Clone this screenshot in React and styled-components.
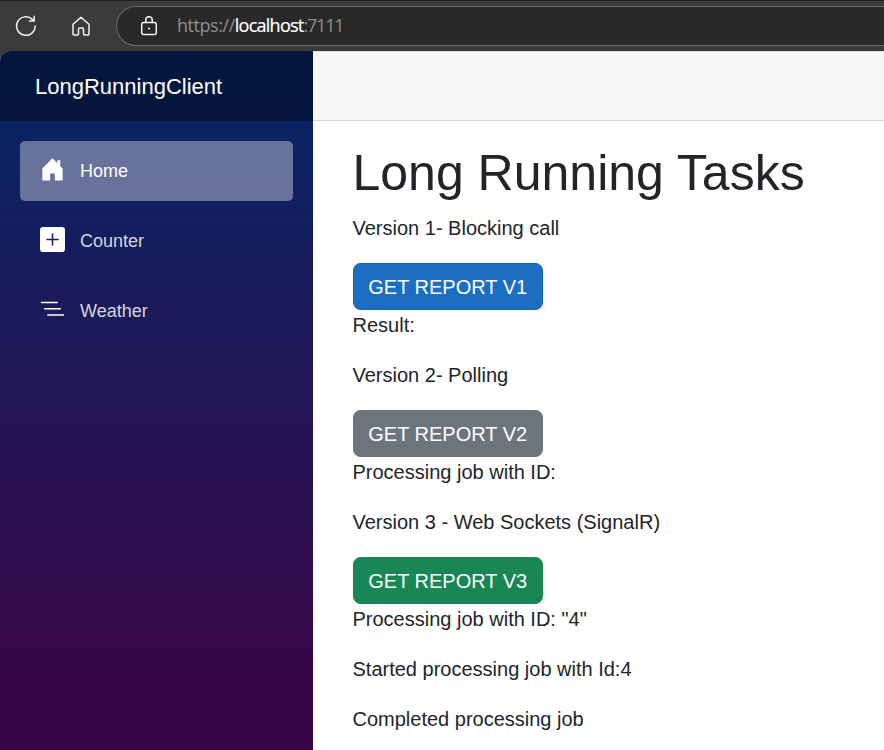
import React from "react";
import styled, { createGlobalStyle } from "styled-components";

const GlobalStyle = createGlobalStyle`
  *, *::before, *::after { box-sizing: border-box; }
  body {
    margin: 0;
    background: #3b3b3b;
    color: #212529;
    font: 400 20px/30px "Liberation Sans", Arial, sans-serif;
  }
`;

const Window = styled.div`
  display: flex;
  flex-direction: column;
  height: 750px;
  overflow: hidden;
`;

const BrowserBar = styled.header`
  display: flex;
  align-items: center;
  flex: none;
  height: 51px;
  padding-left: 15px;
  border-top: 1px solid #202020;
  background: #3b3b3b;
  color: #f2f2f2;
`;

const BarIcon = styled.svg`
  flex: none;
  width: 22px;
  height: 22px;
  margin-right: ${(p) => p.$gap || 0}px;
  fill: none;
  stroke: currentColor;
  stroke-width: 1.5;
  stroke-linecap: round;
  stroke-linejoin: round;
`;

const AddressBar = styled.div`
  display: flex;
  align-items: center;
  flex: 1;
  height: 40px;
  padding-left: 21px;
  border: 1px solid #6b6b6b;
  border-right: 0;
  border-radius: 20px 0 0 20px;
  background: #292929;
`;

const Url = styled.span`
  padding-bottom: 2px;
  color: #8e8e8e;
  font: 400 18px/24px "Open Sans", "Noto Sans", sans-serif;
  letter-spacing: -0.45px;
`;

const Host = styled.span`
  color: #fff;
  letter-spacing: -0.75px;
  -webkit-text-stroke: 0.2px #fff;
`;

const Port = styled.span`
  letter-spacing: -1.2px;
`;

const Page = styled.div`
  display: flex;
  flex: 1;
  min-height: 0;
  overflow: hidden;
  border-top-left-radius: 10px;
  background: #fff;
`;

const Sidebar = styled.aside`
  flex: none;
  width: 313px;
  background: linear-gradient(180deg, rgb(5, 39, 103) 0%, #3a0647 93%);
`;

const Brand = styled.div`
  display: flex;
  align-items: center;
  height: 70px;
  padding: 2px 0 0 35px;
  background: rgba(0, 0, 0, 0.4);
  color: #fff;
  font-size: 22px;
`;

const Nav = styled.nav`
  display: flex;
  flex-direction: column;
  gap: 10px;
  padding: 20px;
`;

const NavItem = styled.a`
  display: flex;
  align-items: center;
  height: 60px;
  padding-left: 20px;
  border-radius: 5px;
  background: ${(p) => (p.$active ? "rgba(255, 255, 255, 0.37)" : "transparent")};
  color: ${(p) => (p.$active ? "#fff" : "#d7d7d7")};
  font-size: 18px;
`;

const NavIcon = styled.svg`
  width: 25px;
  height: 25px;
  margin: 0 15px 3px 0;
  fill: #fff;
`;

const Main = styled.main`
  flex: 1;
  min-width: 0;
`;

const TopRow = styled.div`
  height: 70px;
  border-top: 1px solid #dedede;
  border-bottom: 1px solid #d6d5d5;
  background: #f7f7f7;
`;

const Content = styled.article`
  padding: 22px 30px 0 39.5px;
`;

const Title = styled.h1`
  margin: 0 0 10px;
  font-size: 50px;
  font-weight: 400;
  line-height: 60px;
`;

const Text = styled.p`
  margin: 0 0 20px;
`;

const Button = styled.button`
  display: block;
  width: 190.5px;
  height: 47px;
  padding: 0;
  border: 1px solid ${(p) => p.$border};
  border-radius: 7.5px;
  background: ${(p) => p.$color};
  color: #fff;
  font: inherit;
`;

export default function App() {
  return (
    <Window>
      <GlobalStyle />
      <BrowserBar>
        <BarIcon $gap={33} viewBox="0 0 22 22">
          <path d="M20.2 11a9.3 9.3 0 1 1-3.1-6.9L19 6M19.2 1.3V6H14.5" />
        </BarIcon>
        <BarIcon $gap={24} viewBox="0 0 22 22">
          <path d="M3 9.2 11 2.3l8 6.9V19a1 1 0 0 1-1 1h-3.5a1 1 0 0 1-1-1v-5a1 1 0 0 0-1-1h-3a1 1 0 0 0-1 1v5a1 1 0 0 1-1 1H4a1 1 0 0 1-1-1Z" />
        </BarIcon>
        <AddressBar>
          <BarIcon $gap={17} viewBox="0 0 22 22">
            <rect x="3.7" y="7.5" width="14.6" height="12" rx="2" />
            <path d="M7.8 7.5V5a3.2 3.2 0 0 1 6.4 0v2.5" />
            <circle cx="11" cy="13.5" r="1.1" fill="currentColor" stroke="none" />
          </BarIcon>
          <Url>
            https://<Host>localhost</Host>
            <Port>:7111</Port>
          </Url>
        </AddressBar>
      </BrowserBar>
      <Page>
        <Sidebar>
          <Brand>LongRunningClient</Brand>
          <Nav>
            <NavItem $active>
              <NavIcon viewBox="0 0 16 16">
                <path d="M6.5 14.5v-3.505c0-.245.25-.495.5-.495h2c.25 0 .5.25.5.5v3.5a.5.5 0 0 0 .5.5h4a.5.5 0 0 0 .5-.5v-7a.5.5 0 0 0-.146-.354L13 5.793V2.5a.5.5 0 0 0-.5-.5h-1a.5.5 0 0 0-.5.5v1.293L8.354 1.146a.5.5 0 0 0-.708 0l-6 6A.5.5 0 0 0 1.5 7.5v7a.5.5 0 0 0 .5.5h4a.5.5 0 0 0 .5-.5Z" />
              </NavIcon>
              Home
            </NavItem>
            <NavItem>
              <NavIcon viewBox="0 0 16 16">
                <path d="M2 0a2 2 0 0 0-2 2v12a2 2 0 0 0 2 2h12a2 2 0 0 0 2-2V2a2 2 0 0 0-2-2H2zm6.5 4.5v3h3a.5.5 0 0 1 0 1h-3v3a.5.5 0 0 1-1 0v-3h-3a.5.5 0 0 1 0-1h3v-3a.5.5 0 0 1 1 0z" />
              </NavIcon>
              Counter
            </NavItem>
            <NavItem>
              <NavIcon viewBox="0 0 16 16">
                <path fillRule="evenodd" d="M4.5 11.5A.5.5 0 0 1 5 11h10a.5.5 0 0 1 0 1H5a.5.5 0 0 1-.5-.5zm-2-4A.5.5 0 0 1 3 7h10a.5.5 0 0 1 0 1H3a.5.5 0 0 1-.5-.5zm-2-4A.5.5 0 0 1 1 3h10a.5.5 0 0 1 0 1H1a.5.5 0 0 1-.5-.5z" />
              </NavIcon>
              Weather
            </NavItem>
          </Nav>
        </Sidebar>
        <Main>
          <TopRow />
          <Content>
            <Title>Long Running Tasks</Title>
            <Text>Version 1- Blocking call</Text>
            <Button $color="#1b6ec2" $border="#1861ac">GET REPORT V1</Button>
            <Text>Result:</Text>
            <Text>Version 2- Polling</Text>
            <Button $color="#6c757d" $border="#6c757d">GET REPORT V2</Button>
            <Text>Processing job with ID:</Text>
            <Text>Version 3 - Web Sockets (SignalR)</Text>
            <Button $color="#198754" $border="#198754">GET REPORT V3</Button>
            <Text>Processing job with ID: "4"</Text>
            <Text>Started processing job with Id:4</Text>
            <Text>Completed processing job</Text>
          </Content>
        </Main>
      </Page>
    </Window>
  );
}
